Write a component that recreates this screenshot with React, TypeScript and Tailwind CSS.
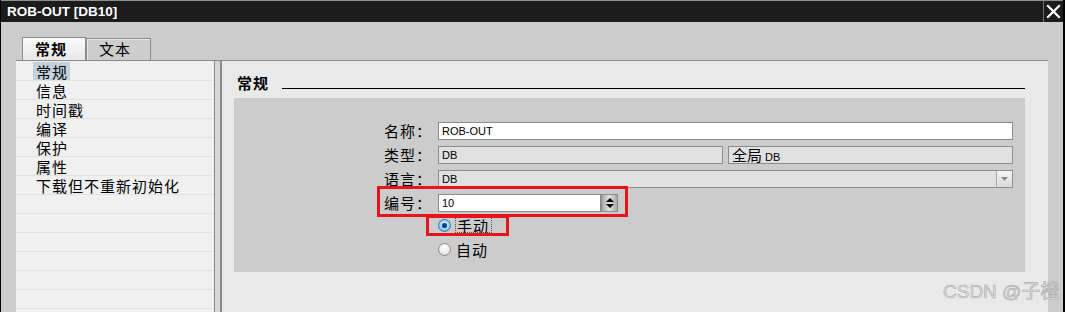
import React from "react";

const CJK = "font-['Noto_Sans_CJK_SC','Liberation_Sans',sans-serif]";
const LAT = "font-['Liberation_Sans','Noto_Sans_CJK_SC',sans-serif]";

function Radio({ checked }: { checked: boolean }) {
  return checked ? (
    <div className="w-[13px] h-[13px] rounded-full border border-[#3a78a8] bg-[radial-gradient(circle_at_50%_40%,#e8f6ff_0%,#8fd3f6_55%,#3fa9e0_100%)] flex items-center justify-center shrink-0">
      <div className="w-[5px] h-[5px] rounded-full bg-[#0b3f86]" />
    </div>
  ) : (
    <div className="w-[13px] h-[13px] rounded-full border border-[#8a8a8a] bg-[radial-gradient(circle_at_50%_35%,#ffffff_0%,#ececec_55%,#c4c4c4_100%)] shrink-0" />
  );
}

export default function App() {
  const navItems = ["常规", "信息", "时间戳", "编译", "保护", "属性", "下载但不重新初始化"];
  const rows = [...navItems, "", "", "", "", "", "", ""];
  return (
    <div className={`w-[1065px] h-[312px] overflow-hidden relative bg-[#cccccc] border-l border-r-2 border-black flex flex-col ${LAT}`}>
      {/* title bar */}
      <div className="h-[22px] shrink-0 flex items-stretch bg-[#1c1c1c] border-t border-[#8e8e8e]">
        <div className="flex-1 flex items-center pl-[6px] text-white text-[13.5px] font-bold leading-none">
          ROB-OUT [DB10]
        </div>
        <div className="w-px bg-[#6e6e6e]" />
        <div className="w-[19px] flex items-center justify-center">
          <svg width="15" height="15" viewBox="0 0 15 15">
            <path d="M2 2 L13 13 M13 2 L2 13" stroke="#ffffff" strokeWidth="2.2" strokeLinecap="square" />
          </svg>
        </div>
      </div>

      {/* tabs */}
      <div className="h-[15px] shrink-0" />
      <div className="h-[23px] shrink-0 flex items-end pl-[21px]">
        <div className={`w-[64px] h-[23px] border border-b-0 border-[#8c8c8c] bg-[linear-gradient(#fbfbfb,#e8e8e8)] pl-[12px] flex items-center text-[15px] font-bold tracking-[1px] text-black ${CJK}`}>
          常规
        </div>
        <div className={`w-[65px] h-[22px] border border-b-0 border-[#8c8c8c] bg-[#cdcdcd] shadow-[inset_1px_1px_0_#e6e6e6] pl-[12px] flex items-center text-[15px] tracking-[1px] text-black ${CJK}`}>
          文本
        </div>
      </div>

      {/* content */}
      <div className="flex-1 ml-[15px] w-[1032px] flex border-t border-[#8a8a8a]">
        {/* left nav */}
        <div className={`w-[198px] bg-[#f0f0f0] pt-[1px] ${CJK}`}>
          {rows.map((t, i) => (
            <div key={i} className="h-[19px] border-b border-[#e2e2e2] pl-[20px] flex items-center text-[15px] tracking-[1px] text-black leading-none">
              {i === 0 ? (
                <span className="bg-[#c4d1dd] -ml-[3px] pl-[3px] pr-[2px] h-[18px] flex items-center">{t}</span>
              ) : (
                t
              )}
            </div>
          ))}
        </div>
        {/* splitter */}
        <div className="w-[8px] border-l border-r-2 border-[#8a8a8a] bg-[#d6d6d6]" />
        {/* right */}
        <div className="flex-1 bg-[#e9e9e9] pl-[12px] pr-[23px] pt-[13px]">
          <div className="h-[18px] flex items-start">
            <div className={`ml-[3px] text-[15px] font-bold tracking-[1px] leading-[18px] text-black ${CJK}`}>常规</div>
            <div className="flex-1 ml-[13px] mt-[14px] h-px bg-black" />
          </div>
          <div className="mt-[6px] h-[174px] bg-[#cccccc] relative">
            <div className="pt-[24px] pl-[150px] pr-[12px]">
              <div className="flex flex-col gap-[6px]">
                <div className="flex items-center h-[18px]">
                  <div className={`w-[54px] text-[15px] tracking-[1px] leading-[18px] text-black ${CJK}`}>名称：</div>
                  <div className="flex-1 h-[18px] border border-[#8c8c8c] bg-white pl-[3px] flex items-center text-[11px] text-black">ROB-OUT</div>
                </div>
                <div className="flex items-center h-[18px]">
                  <div className={`w-[54px] text-[15px] tracking-[1px] leading-[18px] text-black ${CJK}`}>类型：</div>
                  <div className="w-[285px] h-[18px] border border-[#8c8c8c] bg-[#e1e1e1] pl-[3px] flex items-center text-[11px] text-black">DB</div>
                  <div className="flex-1 ml-[5px] h-[18px] border border-[#8c8c8c] bg-[#e1e1e1] pl-[3px] flex items-baseline leading-[16px] text-[11px] text-black">
                    <span className={`text-[15px] leading-[16px] mr-[3px] ${CJK}`}>全局</span>
                    <span>DB</span>
                  </div>
                </div>
                <div className="flex items-center h-[18px]">
                  <div className={`w-[54px] text-[15px] tracking-[1px] leading-[18px] text-black ${CJK}`}>语言：</div>
                  <div className="flex-1 h-[18px] border border-[#8c8c8c] bg-[#e1e1e1] flex items-stretch">
                    <div className="flex-1 pl-[3px] flex items-center text-[11px] text-black">DB</div>
                    <div className="w-[16px] border-l border-[#a8a8a8] bg-[linear-gradient(#f6f6f6,#d9d9d9)] flex items-center justify-center">
                      <svg width="7" height="4" viewBox="0 0 7 4"><path d="M0 0 H7 L3.5 4 Z" fill="#8a8a8a" /></svg>
                    </div>
                  </div>
                </div>
                <div className="flex items-center h-[18px]">
                  <div className={`w-[54px] text-[15px] tracking-[1px] leading-[18px] text-black ${CJK}`}>编号：</div>
                  <div className="w-[163px] h-[18px] border border-[#8c8c8c] bg-white pl-[3px] flex items-center text-[11px] text-black">10</div>
                  <div className="w-[17px] h-[18px] border border-[#8c8c8c] bg-[linear-gradient(90deg,#a9a9a9,#e2e2e2_50%,#a9a9a9)] flex flex-col items-center justify-center gap-[2px]">
                    <svg width="8" height="4" viewBox="0 0 8 4"><path d="M0 4 H8 L4 0 Z" fill="#000" /></svg>
                    <svg width="8" height="4" viewBox="0 0 8 4"><path d="M0 0 H8 L4 4 Z" fill="#000" /></svg>
                  </div>
                </div>
              </div>
              <div className="mt-[1px] pl-[54px]">
                <div className="h-[24px] flex items-center">
                  <Radio checked />
                  <div className={`ml-[4px] border border-dotted border-[#555] h-[16px] pl-[1px] pr-[2px] flex items-center text-[15px] tracking-[1px] leading-none text-black ${CJK}`}>手动</div>
                </div>
                <div className="h-[24px] flex items-center">
                  <Radio checked={false} />
                  <div className={`ml-[5px] text-[15px] tracking-[1px] leading-none text-black ${CJK}`}>自动</div>
                </div>
              </div>
            </div>
            {/* red annotation boxes */}
            <div className="absolute left-[143px] top-[88px] w-[251px] h-[31px] border-[3px] border-[#e8141c]" />
            <div className="absolute left-[192px] top-[117px] w-[83px] h-[21px] border-[3px] border-[#e8141c]" />
          </div>
        </div>
      </div>

      {/* watermark */}
      <div className={`absolute left-[942px] top-[280px] text-[19px] leading-[24px] text-[#e2e2e2] [-webkit-text-stroke:0.6px_#a9a9a9] whitespace-nowrap ${LAT}`}>
        CSDN @子橙
      </div>
    </div>
  );
}
